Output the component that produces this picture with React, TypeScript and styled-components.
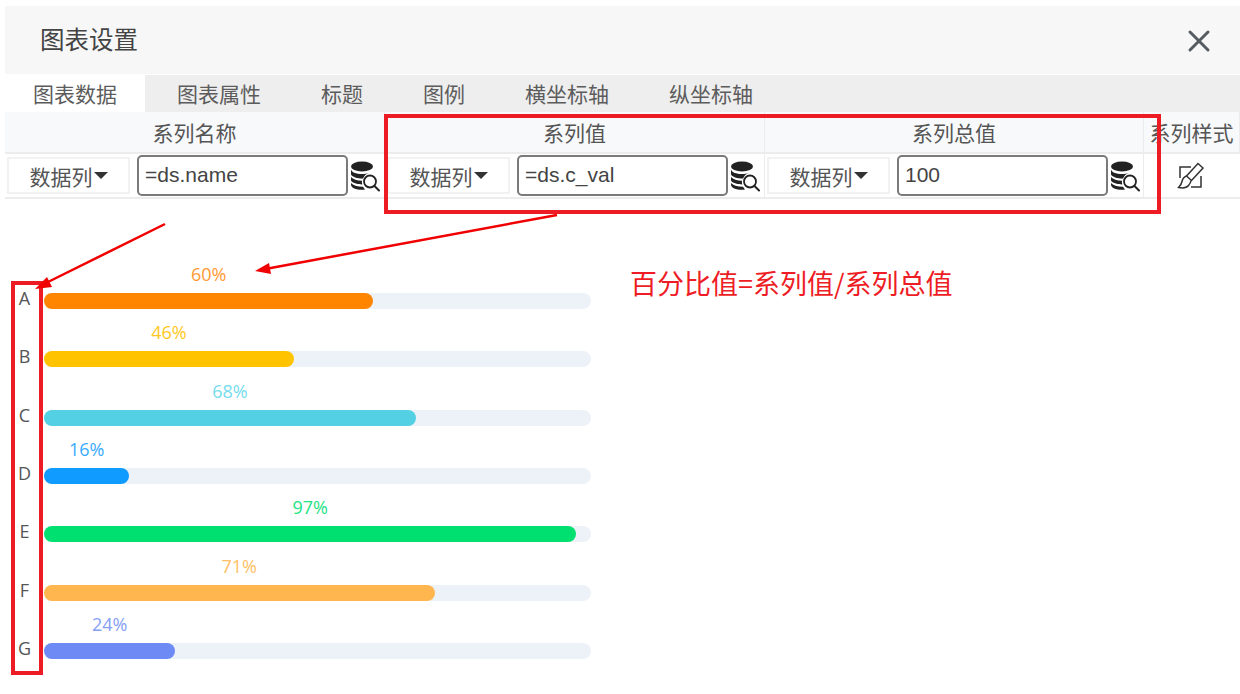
import styled, { createGlobalStyle } from "styled-components";

const cjk = `"Noto Sans CJK SC", "Noto Sans", sans-serif`;

const tabs = ["图表数据", "图表属性", "标题", "图例", "横坐标轴", "纵坐标轴"];

const columns = [
  { title: "系列名称", value: "=ds.name" },
  { title: "系列值", value: "=ds.c_val" },
  { title: "系列总值", value: "100" },
];

const bars = [
  { name: "A", pct: 60.2, label: "60%", color: "#ff8500", text: "#ff9a33" },
  { name: "B", pct: 45.7, label: "46%", color: "#ffc300", text: "#ffc824" },
  { name: "C", pct: 68, label: "68%", color: "#54d0e4", text: "#74dcec" },
  { name: "D", pct: 15.6, label: "16%", color: "#0f9bff", text: "#38aaff" },
  { name: "E", pct: 97.3, label: "97%", color: "#00e070", text: "#1fe384" },
  { name: "F", pct: 71.4, label: "71%", color: "#ffb64f", text: "#ffbf66" },
  { name: "G", pct: 24, label: "24%", color: "#6d8af5", text: "#86a0f6" },
];

const DbSearchIcon = () => (
  <svg width="30" height="32" viewBox="0 0 30 32">
    <ellipse cx="12" cy="6.5" rx="11" ry="5" fill="#222" />
    <path d="M1 9.5c1 3 5 4.500 11 4.500 3 0 5-.4 7-1.200C16 14 14 16 13 18.500 7 18.500 2.500 17 1 14.500z" fill="#222" />
    <path d="M1 17c2 2.500 6 3.500 11 3.700-.2 1.300-.1 2.600.3 3.800C7 24.300 2.500 23 1 20.500z" fill="#222" />
    <path d="M1 23c2 2.500 6 3.500 12 3.700l2 2.800c-1 .2-2 .3-3 .3-6 0-11-2-11-5z" fill="#222" />
    <circle cx="20" cy="21.500" r="6" fill="#fff" stroke="#222" strokeWidth="1.800" />
    <path d="M24.500 26l4.500 4.500" stroke="#222" strokeWidth="2" strokeLinecap="round" />
  </svg>
);

const BrushIcon = () => (
  <svg width="28" height="28" viewBox="0 0 28 28" fill="none" stroke="#333" strokeWidth="1.500">
    <path d="M14 5H3v11" />
    <path d="M24 14v11H14" />
    <path d="M21 1.500l5 4.500-11.500 12.500-5-4.500z" />
    <path d="M9.500 14c-3 1-4 3-4.500 5.500-.5 2.500-1.500 4-3.500 6 4 .8 8 .5 10-2 1.800-2 2.300-3.500 2.500-5" />
  </svg>
);

const App = () => (
  <>
    <GlobalStyle />
    <Page>
      <TitleBar>
        <Title>图表设置</Title>
        <CloseButton>
          <svg width="24" height="24" viewBox="0 0 24 24" stroke="#555b60" strokeWidth="3" strokeLinecap="round">
            <path d="M3 3l18 18M21 3L3 21" />
          </svg>
        </CloseButton>
      </TitleBar>
      <TabBar>
        {tabs.map((t, i) => (
          <Tab key={t} $active={i === 0}>
            {t}
          </Tab>
        ))}
      </TabBar>
      <SettingsTable>
        {columns.map((c) => (
          <HeadCell key={c.title}>{c.title}</HeadCell>
        ))}
        <HeadCell>系列样式</HeadCell>
        {columns.map((c) => (
          <BodyCell key={c.title}>
            <ColumnSelect>
              数据列<Caret />
            </ColumnSelect>
            <ValueInput>{c.value}</ValueInput>
            <IconSlot>
              <DbSearchIcon />
            </IconSlot>
          </BodyCell>
        ))}
        <StyleCell>
          <BrushIcon />
        </StyleCell>
      </SettingsTable>
      <Chart>
        {bars.map((b) => (
          <ChartRow key={b.name}>
            <RowName>{b.name}</RowName>
            <BarColumn>
              <BarValue $color={b.text} style={{ width: `${b.pct}%` }}>
                {b.label}
              </BarValue>
              <Track>
                <Fill $color={b.color} style={{ width: `${b.pct}%` }} />
              </Track>
            </BarColumn>
          </ChartRow>
        ))}
      </Chart>

      <RedBox $x={384} $y={114} $w={777} $h={100} />
      <RedBox $x={11} $y={281} $w={32} $h={394} />
      <Arrows width="1240" height="694" viewBox="0 0 1240 694">
        <path d="M165 224L48 282" stroke="#f00000" strokeWidth="2.500" />
        <polygon points="35,289 47,277 52,287" fill="#f00000" />
        <path d="M557 215L268 268.500" stroke="#f00000" strokeWidth="2.500" />
        <polygon points="255,271 269,263 271,274" fill="#f00000" />
      </Arrows>
      <Note>百分比值=系列值/系列总值</Note>
    </Page>
  </>
);

const GlobalStyle = createGlobalStyle`
  html, body {
    margin: 0;
    background: #fff;
  }
`;

const Page = styled.div`
  position: relative;
  width: 1240px;
  height: 694px;
  overflow: hidden;
  box-sizing: border-box;
  padding: 6px 0 0 5px;
  font-family: ${cjk};
  color: #555;
`;

const TitleBar = styled.header`
  display: flex;
  align-items: center;
  justify-content: space-between;
  height: 68px;
  padding: 0 29px 0 35px;
  background: #f7f7f7;
`;

const Title = styled.h1`
  margin: 0 0 3px;
  font-size: 24.500px;
  font-weight: 400;
  color: #444;
`;

const CloseButton = styled.div`
  display: flex;
  margin-top: 1px;
`;

const TabBar = styled.nav`
  display: flex;
  height: 37px;
  margin-top: 1px;
  background: #eeeeee;
`;

const Tab = styled.div<{ $active: boolean }>`
  padding: 0 ${(p) => (p.$active ? "28px" : "30px")};
  line-height: 37px;
  font-size: 21px;
  background: ${(p) => (p.$active ? "#fff" : "transparent")};
  color: #5c5c5c;
  white-space: nowrap;

  &:nth-child(2) {
    margin-left: 2px;
  }
`;

const SettingsTable = styled.section`
  display: grid;
  grid-template-columns: 380px 380px 379px 96px;
  grid-template-rows: 42px 43px;
  border-bottom: 2px solid #ececec;
`;

const HeadCell = styled.div`
  box-sizing: border-box;
  text-align: center;
  line-height: 40px;
  font-size: 21px;
  white-space: nowrap;
  overflow: hidden;
  background: #f8f9fb;
  border-bottom: 2px solid #ececec;
  border-right: 1px solid #ececec;
`;

const BodyCell = styled.div`
  box-sizing: border-box;
  display: flex;
  align-items: center;
  padding-left: 2px;
  border-right: 1px solid #ececec;
`;

const StyleCell = styled(BodyCell)`
  justify-content: center;
  padding: 0 0 0 0;
  margin-left: -3px;
  border-right: none;
`;

const ColumnSelect = styled.div`
  box-sizing: border-box;
  display: flex;
  align-items: center;
  justify-content: center;
  width: 123px;
  height: 37px;
  margin-right: 7px;
  border: 2px solid #f2f2f2;
  font-size: 21px;
  color: #555;
`;

const Caret = styled.span`
  width: 0;
  height: 0;
  margin-left: 1px;
  border-left: 7px solid transparent;
  border-right: 7px solid transparent;
  border-top: 7px solid #333;
`;

const ValueInput = styled.div`
  box-sizing: border-box;
  width: 211px;
  height: 41px;
  padding-left: 6px;
  border: 2px solid #7a7a7a;
  border-radius: 5px;
  font-family: "Liberation Sans", Arial, sans-serif;
  font-size: 21px;
  line-height: 36px;
  color: #444;
`;

const IconSlot = styled.div`
  display: flex;
  margin-left: 2px;
`;

const Chart = styled.section`
  display: grid;
  grid-auto-rows: 47px;
  row-gap: 11.330px;
  width: 586px;
  margin: 63px 0 0 0;
`;

const ChartRow = styled.div`
  display: grid;
  grid-template-columns: 39px 547px;
  align-items: end;
`;

const RowName = styled.div`
  text-align: center;
  font-family: "Open Sans", sans-serif;
  font-size: 18px;
  line-height: 24px;
  margin-bottom: -1px;
  color: #555;
`;

const BarColumn = styled.div`
  display: flex;
  flex-direction: column;
`;

const BarValue = styled.div<{ $color: string }>`
  height: 24px;
  margin-bottom: 7px;
  text-align: center;
  font-family: "Open Sans", sans-serif;
  font-size: 18px;
  line-height: 24px;
  white-space: nowrap;
  color: ${(p) => p.$color};
`;

const Track = styled.div`
  height: 16px;
  border-radius: 8px;
  background: #edf2f9;
`;

const Fill = styled.div<{ $color: string }>`
  height: 100%;
  border-radius: 8px;
  background: ${(p) => p.$color};
`;

const RedBox = styled.div<{ $x: number; $y: number; $w: number; $h: number }>`
  position: absolute;
  box-sizing: border-box;
  left: ${(p) => p.$x}px;
  top: ${(p) => p.$y}px;
  width: ${(p) => p.$w}px;
  height: ${(p) => p.$h}px;
  border: 4px solid #ed1c24;
`;

const Arrows = styled.svg`
  position: absolute;
  left: 0;
  top: 0;
  pointer-events: none;
`;

const Note = styled.div`
  position: absolute;
  left: 630px;
  top: 263px;
  font-size: 27px;
  line-height: 40px;
  color: #ee1c24;
  white-space: nowrap;
`;

export default App;
